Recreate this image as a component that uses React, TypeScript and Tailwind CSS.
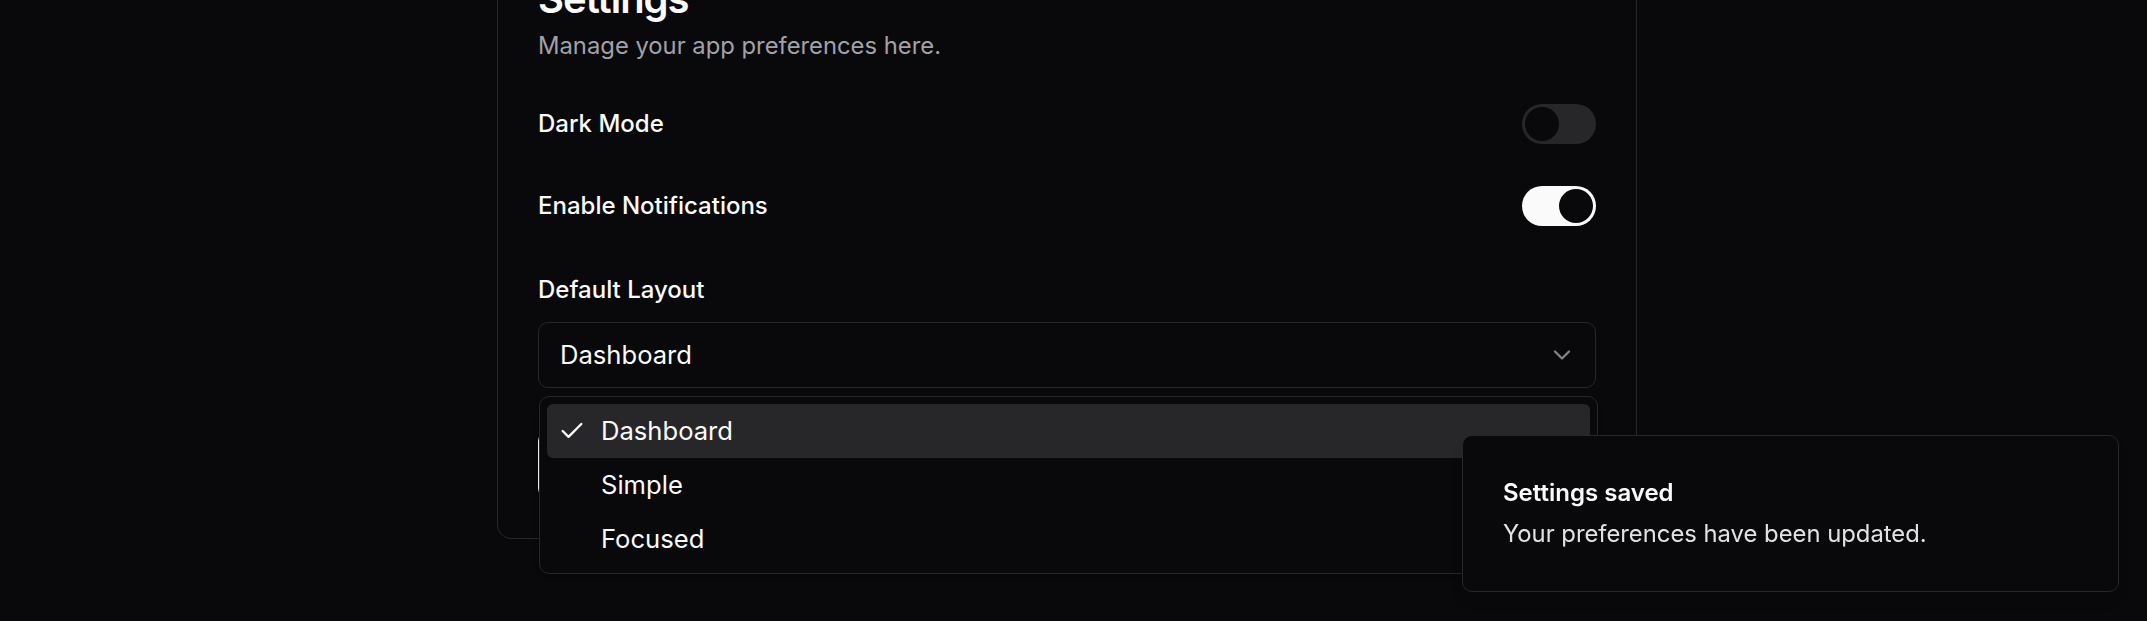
import React from "react";
import { Check, ChevronDown } from "lucide-react";

function Toggle({ on }: { on: boolean }) {
  return (
    <div
      className={
        "flex h-[40px] w-[74px] items-center rounded-full border-[3px] border-transparent " +
        (on ? "justify-end bg-[#fafafa]" : "justify-start bg-[#27272a]")
      }
    >
      <div className="h-[34px] w-[34px] rounded-full bg-[#09090b]" />
    </div>
  );
}

export default function App() {
  return (
    <div className="relative h-[621px] w-full overflow-hidden bg-[#09090b] font-[Inter,sans-serif] text-[#fafafa]">
      <div className="flex justify-center pr-[13px]">
        <div className="mt-[-62px] w-[1140px] rounded-[14px] border border-[#27272a] bg-[#09090b] p-[40px]">
          <h2 className="h-[40px] text-[40px] font-semibold leading-none tracking-tight">Settings</h2>
          <p className="mt-[10px] text-[23.8px] leading-[34px] text-[#a1a1aa]">Manage your app preferences here.</p>

          <div className="mt-[41px] flex h-[40px] items-center justify-between">
            <span className="text-[24px] font-medium leading-none">Dark Mode</span>
            <Toggle on={false} />
          </div>
          <div className="mt-[42px] flex h-[40px] items-center justify-between">
            <span className="text-[24px] font-medium leading-none">Enable Notifications</span>
            <Toggle on={true} />
          </div>

          <div className="mt-[52px] h-[24px] text-[24px] font-medium leading-none">Default Layout</div>

          <div className="relative mt-[20px]">
            <div className="flex h-[66px] items-center justify-between rounded-[10px] border border-[#27272a] bg-[#09090b] pl-[21px] pr-[19px]">
              <span className="text-[25.6px] leading-none">Dashboard</span>
              <ChevronDown size={28} strokeWidth={2} className="text-[#fafafa] opacity-50" />
            </div>

            <div className="absolute left-[1px] right-[-2px] top-[calc(100%+8px)] z-20 rounded-[10px] border border-[#27272a] bg-[#09090b] p-[7px] shadow-md">
              <div className="relative flex h-[54px] items-center rounded-[6px] bg-[#27272a] pl-[54px] text-[25.6px] leading-none">
                <Check size={28} strokeWidth={2} className="absolute left-[11px] top-1/2 -translate-y-1/2" />
                Dashboard
              </div>
              <div className="flex h-[54px] items-center rounded-[6px] pl-[54px] text-[25.6px] leading-none">Simple</div>
              <div className="flex h-[54px] items-center rounded-[6px] pl-[54px] text-[25.6px] leading-none">Focused</div>
            </div>
          </div>

          <button className="mt-[43px] flex h-[67px] w-full items-center justify-center rounded-[10px] bg-[#fafafa] text-[24px] font-medium text-[#18181b]">
            Save Changes
          </button>
        </div>
      </div>

      <div className="fixed bottom-[29px] right-[28px] z-30 w-[657px] rounded-[10px] border border-[#27272a] bg-[#09090b] p-[40px] shadow-lg">
        <div className="text-[24px] font-semibold leading-[34px]">Settings saved</div>
        <div className="mt-[7px] text-[23.8px] leading-[34px] opacity-90">Your preferences have been updated.</div>
      </div>
    </div>
  );
}
